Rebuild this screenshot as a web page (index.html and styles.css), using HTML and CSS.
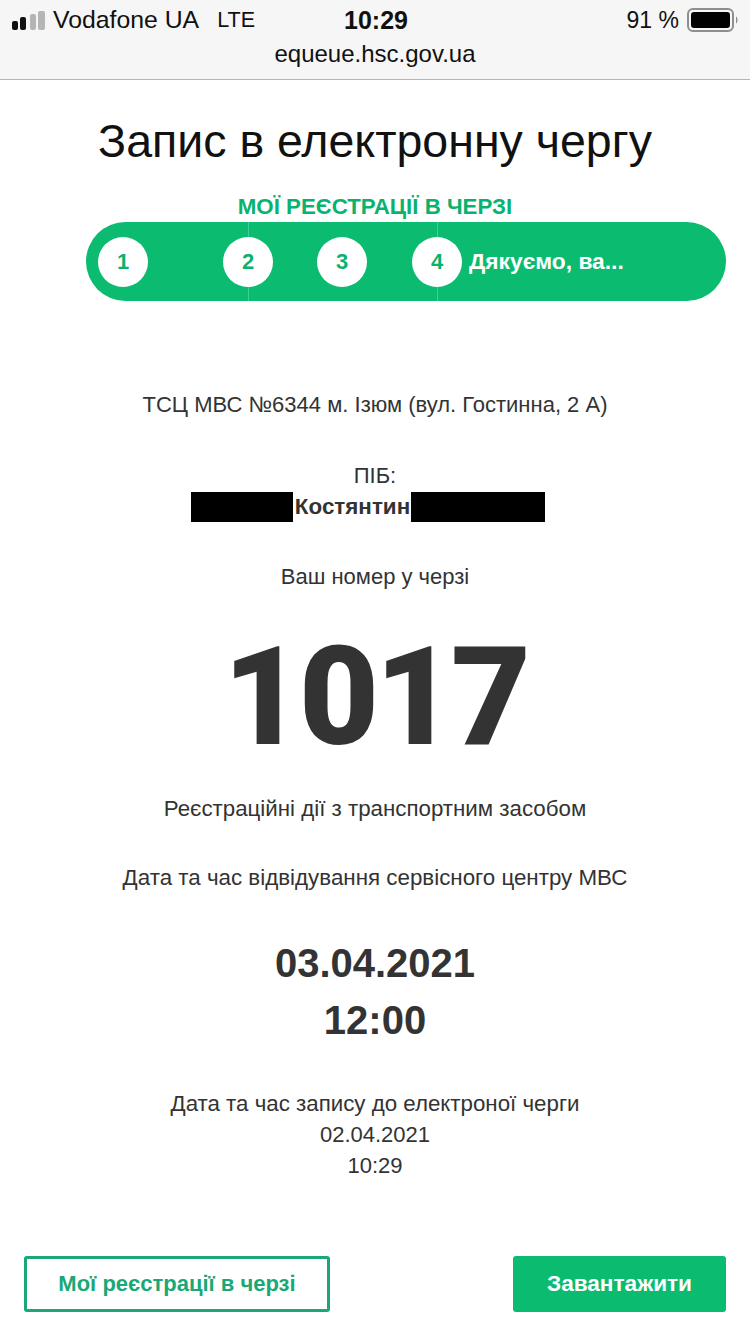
FILE: index.html
```html
<!DOCTYPE html>
<html lang="uk">
<head>
    <meta charset="UTF-8">
    <meta name="viewport" content="width=device-width, initial-scale=1.0">
    <title>Запис в електронну чергу</title>
    <link rel="stylesheet" href="styles.css">
</head>
<body>

<div class="browser-bar">
    <div class="status-row">
        <div class="status-left">
            <svg class="signal" width="34" height="19" viewBox="0 0 34 19">
                <rect x="0" y="10" width="6" height="9" rx="2" fill="#111"/>
                <rect x="8" y="6" width="6" height="13" rx="2" fill="#111"/>
                <rect x="18" y="3" width="6" height="16" rx="2" fill="#b5b5b5"/>
                <rect x="26" y="0" width="7" height="19" rx="2" fill="#b5b5b5"/>
            </svg>
            <span class="carrier">Vodafone UA</span>
            <span class="network">LTE</span>
        </div>
        <div class="status-time">10:29</div>
        <div class="status-right">
            <span class="percent">91 %</span>
            <svg class="battery" width="52" height="24" viewBox="0 0 52 24">
                <rect x="1" y="1" width="45" height="22" rx="5" fill="none" stroke="#8e8e8e" stroke-width="2"/>
                <rect x="4" y="4" width="39" height="16" rx="3" fill="#000"/>
                <path d="M49 8.5 C51 9.5 51 14.5 49 15.5 Z" fill="#8e8e8e"/>
            </svg>
        </div>
    </div>
    <div class="url">equeue.hsc.gov.ua</div>
</div>

<div class="page">
    <h1 class="title">Запис в електронну чергу</h1>
    <div class="steps-label">МОЇ РЕЄСТРАЦІЇ В ЧЕРЗІ</div>

    <div class="steps">
        <div class="step step-first"><span class="step-num">1</span></div>
        <div class="step step-middle">
            <span class="step-num">2</span>
            <span class="step-num">3</span>
        </div>
        <div class="step step-last">
            <span class="step-num">4</span>
            <span class="step-text">Дякуємо, ва...</span>
        </div>
    </div>

    <div class="ticket">
        <p class="center-name">ТСЦ МВС №6344 м. Ізюм (вул. Гостинна, 2 А)</p>
        <p class="pib-label">ПІБ:</p>
        <div class="pib">
            <span class="hidden-one"></span>
            <b>Костянтин</b>
            <span class="hidden-two"></span>
        </div>
        <p class="queue-label">Ваш номер у черзі</p>
        <div class="queue-number">1017</div>
        <p class="service">Реєстраційні дії з транспортним засобом</p>
        <p class="visit-label">Дата та час відвідування сервісного центру МВС</p>
        <div class="visit-date">03.04.2021</div>
        <div class="visit-time">12:00</div>
        <p class="record-first">Дата та час запису до електроної черги</p>
        <p class="record-line">02.04.2021</p>
        <p class="record-line">10:29</p>
    </div>

    <div class="buttons">
        <a class="btn btn-outline">Мої реєстрації в черзі</a>
        <a class="btn btn-green">Завантажити</a>
    </div>
</div>

</body>
</html>
```

FILE: styles.css
```css
body {
    font-family: "Liberation Sans", Arial, sans-serif;
    margin: 0;
    padding: 0;
    background-color: #fff;
    color: #333;
}

p {
    margin: 0;
    line-height: 24px;
}

/* Browser bar */
.browser-bar {
    height: 79px;
    background-color: #f6f6f6;
    border-bottom: 1px solid #b4b4b4;
    color: #111;
}

.status-row {
    height: 40px;
    display: grid;
    grid-template-columns: 332px auto 1fr;
    align-items: center;
    padding: 0 11px 0 12px;
    font-size: 24.8px;
}

.status-left,
.status-right {
    display: flex;
    align-items: center;
}

.status-right {
    justify-content: flex-end;
}

.signal {
    margin-right: 7px;
}

.network {
    margin-left: 18px;
    font-size: 21.5px;
}

.status-time {
    font-weight: bold;
    font-size: 25px;
}

.percent {
    margin-right: 8px;
    font-size: 23px;
}

.url {
    text-align: center;
    font-size: 24px;
    line-height: 28px;
}

/* Page */
.title {
    margin: 35px 0 0;
    font-size: 46.5px;
    font-weight: normal;
    line-height: 52px;
    color: #111;
    text-align: center;
}

.steps-label {
    margin-top: 27px;
    height: 25px;
    line-height: 25px;
    font-size: 22.3px;
    font-weight: bold;
    color: #0ab26f;
    text-align: center;
}

/* Steps pill */
.steps {
    display: flex;
    margin: 3px 24px 0 86px;
    height: 79px;
    background-color: #0abb70;
    border-radius: 40px;
    overflow: hidden;
    color: #fff;
}

.step {
    display: flex;
    align-items: center;
}

.step-first {
    width: 162px;
    padding-left: 12px;
    box-sizing: border-box;
}

.step-middle {
    width: 190px;
    box-sizing: border-box;
    border-left: 1px solid #3ccf97;
    border-right: 1px solid #3ccf97;
}

.step-last {
    flex: 1;
}

.step-num {
    width: 50px;
    height: 50px;
    border-radius: 50%;
    background-color: #fff;
    color: #0ab26f;
    font-size: 22px;
    font-weight: bold;
    display: flex;
    align-items: center;
    justify-content: center;
    flex-shrink: 0;
}

.step-middle .step-num:first-child {
    margin-left: -26px;
}

.step-middle .step-num:last-child {
    margin-left: 44px;
}

.step-last .step-num {
    margin-left: -26px;
}

.step-text {
    margin-left: 7px;
    font-size: 22.8px;
    font-weight: bold;
    white-space: nowrap;
}

/* Ticket */
.ticket {
    text-align: center;
    font-size: 22px;
}

.center-name {
    margin-top: 92px;
}

.pib-label {
    margin-top: 47px;
}

.pib {
    display: flex;
    justify-content: center;
    align-items: center;
    height: 30px;
    margin-top: 4px;
    margin-left: -14px;
    font-size: 22.4px;
}

.hidden-one {
    width: 102px;
    height: 30px;
    background-color: #000;
    margin-right: 2px;
}

.hidden-two {
    width: 134px;
    height: 30px;
    background-color: #000;
    margin-left: 1px;
}

.queue-label {
    margin-top: 43px;
}

/* Roboto: its 1 has no foot, like the big number in the reference */
.queue-number {
    font-family: Roboto, "Liberation Sans", sans-serif;
    font-size: 138px;
    font-weight: 900;
    line-height: 150px;
    letter-spacing: -4px;
    margin-top: 33px;
}

.service {
    margin-top: 25px;
    font-size: 22.3px;
}

.visit-label {
    margin-top: 45px;
    font-size: 22.35px;
}

.visit-date,
.visit-time {
    font-size: 40px;
    font-weight: bold;
    line-height: 57px;
}

.visit-date {
    margin-top: 45px;
}

.record-first {
    margin-top: 39px;
    font-size: 22.3px;
}

.ticket .record-first,
.ticket .record-line {
    line-height: 31px;
}

/* Buttons */
.buttons {
    display: flex;
    justify-content: space-between;
    padding: 0 24px;
    margin-top: 75px;
}

.btn {
    height: 56px;
    box-sizing: border-box;
    border-radius: 3px;
    font-size: 22px;
    font-weight: bold;
    display: flex;
    align-items: center;
    justify-content: center;
}

.btn-outline {
    width: 306px;
    border: 3px solid #1aa877;
    color: #1aa877;
}

.btn-green {
    width: 213px;
    background-color: #0abb70;
    color: #fff;
    font-size: 22.6px;
}
```
